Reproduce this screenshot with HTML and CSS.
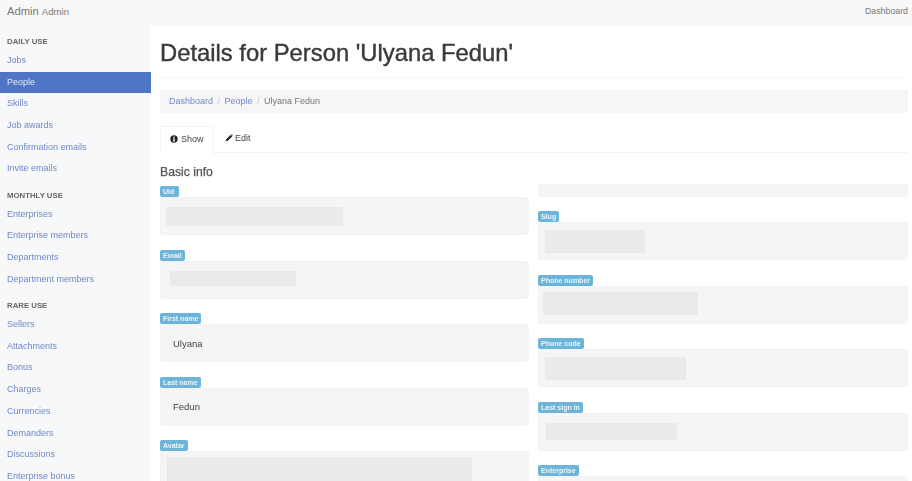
FILE: index.html
```html
<!DOCTYPE html>
<html lang="en">
<head>
    <meta charset="UTF-8">
    <title>Details for Person</title>
    <link rel="stylesheet" href="styles.css">
</head>
<body>
    <div class="topbar">
        <div class="brand">Admin <small>Admin</small></div>
        <a class="top-link">Dashboard</a>
    </div>
    <div class="page">
        <div class="sidebar">
            <h5>Daily use</h5>
            <ul>
                <li><a>Jobs</a></li>
                <li class="active"><a>People</a></li>
                <li><a>Skills</a></li>
                <li><a>Job awards</a></li>
                <li><a>Confirmation emails</a></li>
                <li><a>Invite emails</a></li>
            </ul>
            <h5>Monthly use</h5>
            <ul>
                <li><a>Enterprises</a></li>
                <li><a>Enterprise members</a></li>
                <li><a>Departments</a></li>
                <li><a>Department members</a></li>
            </ul>
            <h5>Rare use</h5>
            <ul>
                <li><a>Sellers</a></li>
                <li><a>Attachments</a></li>
                <li><a>Bonus</a></li>
                <li><a>Charges</a></li>
                <li><a>Currencies</a></li>
                <li><a>Demanders</a></li>
                <li><a>Discussions</a></li>
                <li><a>Enterprise bonus</a></li>
            </ul>
        </div>
        <div class="main">
            <h1>Details for Person 'Ulyana Fedun'</h1>
            <div class="crumbs">
                <a>Dashboard</a><span class="sep">/</span><a>People</a><span class="sep">/</span><span>Ulyana Fedun</span>
            </div>
            <div class="tabs">
                <div class="tab on">
                    <svg viewBox="0 0 12 12"><path fill-rule="evenodd" d="M6 .5a5.500 5.500 0 1 0 0 11 5.500 5.500 0 0 0 0-11zM5 2.300h2v1.800H5zM4.600 5h2.400v3.600h.6v1.100H4.400V8.600H5V6.100h-.4z"/></svg>
                    Show
                </div>
                <div class="tab">
                    <svg viewBox="0 0 12 12"><path d="M8.600 1 11 3.400 4.200 10.200 1 11l.8-3.200zM9.300.3l.7-.3 2 2-.3.700z"/></svg>
                    Edit
                </div>
            </div>
            <h4>Basic info</h4>
            <div class="columns">
                <div class="col">
                    <div class="field">
                        <span class="badge">Uid</span>
                        <div class="well"><div class="blank blank-uid"></div></div>
                    </div>
                    <div class="field">
                        <span class="badge">Email</span>
                        <div class="well"><div class="blank blank-email"></div></div>
                    </div>
                    <div class="field">
                        <span class="badge">First name</span>
                        <div class="well">Ulyana</div>
                    </div>
                    <div class="field">
                        <span class="badge">Last name</span>
                        <div class="well">Fedun</div>
                    </div>
                    <div class="field">
                        <span class="badge">Avatar</span>
                        <div class="well well-top"><div class="blank blank-avatar"></div></div>
                    </div>
                </div>
                <div class="col col-right">
                    <div class="well well-tail"></div>
                    <div class="field">
                        <span class="badge">Slug</span>
                        <div class="well"><div class="blank blank-slug"></div></div>
                    </div>
                    <div class="field">
                        <span class="badge">Phone number</span>
                        <div class="well"><div class="blank blank-phone"></div></div>
                    </div>
                    <div class="field">
                        <span class="badge">Phone code</span>
                        <div class="well"><div class="blank blank-code"></div></div>
                    </div>
                    <div class="field">
                        <span class="badge">Last sign in</span>
                        <div class="well"><div class="blank blank-sign"></div></div>
                    </div>
                    <div class="field">
                        <span class="badge">Enterprise</span>
                        <div class="well"></div>
                    </div>
                </div>
            </div>
        </div>
    </div>
</body>
</html>
```

FILE: styles.css
```css
html, body {
    margin: 0;
    height: 100%;
    overflow: hidden;
}
body {
    font-family: "Liberation Sans", Arial, sans-serif;
    font-size: 9px;
    color: #555;
    background: #fff;
    filter: blur(0.45px);
}
ul {
    margin: 0;
    padding: 0;
}
li {
    list-style: none;
}

/* top bar */
.topbar {
    height: 27px;
    background: #f8f8f8;
    display: flex;
    justify-content: space-between;
    align-items: center;
    padding: 0 4px 5px 7px;
    box-sizing: border-box;
}
.brand {
    font-size: 11.2px;
    color: #777;
}
.brand small {
    font-size: 9.6px;
}
.top-link {
    font-size: 8.8px;
    color: #777;
}

.page {
    display: flex;
    height: 454px;
    overflow: hidden;
}

/* sidebar */
.sidebar {
    width: 151px;
    flex: none;
    background: #f7f8fa;
    padding-top: 10px;
    box-sizing: border-box;
}
.sidebar h5 {
    margin: 0;
    padding-left: 7px;
    font-size: 7.8px;
    line-height: 10px;
    font-weight: bold;
    text-transform: uppercase;
    color: #666;
}
.sidebar ul {
    margin-top: 3px;
    margin-bottom: 10.6px;
}
.sidebar li {
    height: 21.7px;
    line-height: 21.7px;
    padding-left: 7px;
    font-size: 9px;
    color: #7088c4;
}
.sidebar li.active {
    background: #4f75c6;
    color: #dfe6f6;
}

/* main area */
.main {
    flex: 1;
    padding: 0 4px 0 9px;
    min-width: 0;
}
h1 {
    margin: 0;
    padding-top: 13px;
    height: 37px;
    font-size: 23.8px;
    line-height: 26px;
    font-weight: normal;
    -webkit-text-stroke: 0.4px #3a3a3a;
    color: #3a3a3a;
    border-bottom: 1px solid #f6f6f6;
}
.crumbs {
    margin-top: 12px;
    height: 23px;
    line-height: 23px;
    padding-left: 9px;
    background: #f6f6f8;
    color: #777;
}
.crumbs a {
    color: #7088c4;
}
.sep {
    color: #ccc;
    margin: 0 4.5px;
}
.tabs {
    margin-top: 13px;
    height: 26px;
    display: flex;
    border-bottom: 1px solid #f3f3f3;
}
.tab {
    height: 25px;
    padding: 0 10px 2px 12px;
    box-sizing: border-box;
    display: flex;
    align-items: center;
    gap: 2px;
    color: #444;
}
.tab svg {
    width: 8px;
    height: 8px;
    fill: #222;
}
.tab.on {
    width: 53px;
    height: 27px;
    padding-left: 9px;
    padding-right: 0;
    gap: 3px;
    background: #fff;
    border: 1px solid #f3f3f3;
    border-bottom-color: #fff;
}
h4 {
    margin: 12px 0 0;
    font-size: 12.2px;
    line-height: 14px;
    font-weight: normal;
    -webkit-text-stroke: 0.25px #555;
    color: #555;
}

/* fields */
.columns {
    display: grid;
    grid-template-columns: 369px 370px;
    gap: 9px;
}
.col {
    min-width: 0;
    padding-top: 7px;
}
.col-right {
    padding-top: 5px;
}
.field {
    height: 63.6px;
}
.badge {
    display: block;
    width: fit-content;
    min-width: 13px;
    height: 11px;
    line-height: 11px;
    padding: 0 3px;
    border-radius: 2px;
    font-size: 7px;
    font-weight: bold;
    color: #eaf5fa;
    background: #6cb4d8;
}
.well {
    height: 38px;
    box-sizing: border-box;
    background: #f5f5f5;
    border: 1px solid #f3f3f3;
    border-radius: 3px;
    padding-left: 12px;
    display: flex;
    align-items: center;
    font-size: 9.5px;
    color: #444;
}
.well-top {
    height: 60px;
    align-items: flex-start;
}
.well-tail {
    height: 13px;
    margin-bottom: 14px;
}
.blank {
    background: #eaeaea;
    flex: none;
}
.blank-uid {
    width: 177px;
    height: 19px;
    margin-left: -7px;
}
.blank-email {
    width: 126px;
    height: 15px;
    margin: -3px 0 0 -3px;
}
.blank-avatar {
    width: 305px;
    height: 40px;
    margin: 5px 0 0 -6px;
}
.blank-slug {
    width: 100px;
    height: 23px;
    margin-left: -6px;
}
.blank-phone {
    width: 155px;
    height: 23px;
    margin: -2px 0 0 -8px;
}
.blank-code {
    width: 141px;
    height: 23px;
    margin-left: -6px;
}
.blank-sign {
    width: 131px;
    height: 17px;
    margin-left: -5px;
}
```
